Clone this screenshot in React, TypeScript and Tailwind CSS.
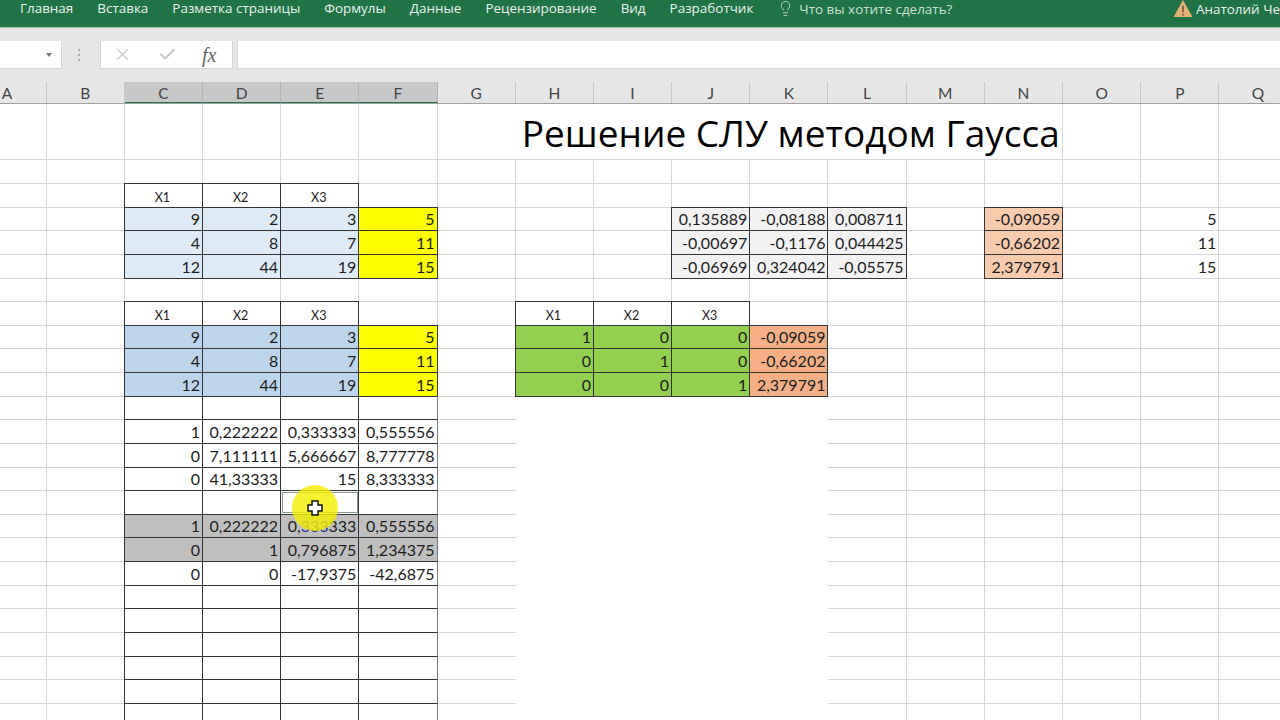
import type { ReactNode } from "react";
import { Check, Lightbulb, X } from "lucide-react";

const cols = ["A", "B", "C", "D", "E", "F", "G", "H", "I", "J", "K", "L", "M", "N", "O", "P", "Q"];
const tabs = ["Главная", "Вставка", "Разметка страницы", "Формулы", "Данные", "Рецензирование", "Вид", "Разработчик"];

const LIGHT = "bg-[#deeaf6]";
const BLUE = "bg-[#bdd5ec]";
const YELLOW = "bg-[#ffff00]";
const GRAY = "bg-[#bfbfbf]";
const PALE = "bg-[#f2f2f2]";
const GREEN = "bg-[#92d050]";
const PEACH = "bg-[#f8cbad]";
const ORANGE = "bg-[#f4b084]";

type Block = { r: number; c: number; fill?: string; small?: boolean; plain?: boolean; vals: ReactNode[] };

// r is the sheet row counted from the title row, c the column counted from A
const blocks: Block[] = [
  { r: 2, c: 2, small: true, vals: ["X1", "X2", "X3"] },
  { r: 3, c: 2, fill: LIGHT, vals: ["9", "2", "3"] },
  { r: 4, c: 2, fill: LIGHT, vals: ["4", "8", "7"] },
  { r: 5, c: 2, fill: LIGHT, vals: ["12", "44", "19"] },
  { r: 3, c: 5, fill: YELLOW, vals: ["5"] },
  { r: 4, c: 5, fill: YELLOW, vals: ["11"] },
  { r: 5, c: 5, fill: YELLOW, vals: ["15"] },
  { r: 3, c: 9, fill: PALE, vals: ["0,135889", "-0,08188", "0,008711"] },
  { r: 4, c: 9, fill: PALE, vals: ["-0,00697", "-0,1176", "0,044425"] },
  { r: 5, c: 9, fill: PALE, vals: ["-0,06969", "0,324042", "-0,05575"] },
  { r: 3, c: 13, fill: PEACH, vals: ["-0,09059"] },
  { r: 4, c: 13, fill: PEACH, vals: ["-0,66202"] },
  { r: 5, c: 13, fill: PEACH, vals: ["2,379791"] },
  { r: 3, c: 15, plain: true, vals: ["5"] },
  { r: 4, c: 15, plain: true, vals: ["11"] },
  { r: 5, c: 15, plain: true, vals: ["15"] },
  { r: 7, c: 2, small: true, vals: ["X1", "X2", "X3"] },
  { r: 8, c: 2, fill: BLUE, vals: ["9", "2", "3"] },
  { r: 9, c: 2, fill: BLUE, vals: ["4", "8", "7"] },
  { r: 10, c: 2, fill: BLUE, vals: ["12", "44", "19"] },
  { r: 8, c: 5, fill: YELLOW, vals: ["5"] },
  { r: 9, c: 5, fill: YELLOW, vals: ["11"] },
  { r: 10, c: 5, fill: YELLOW, vals: ["15"] },
  { r: 7, c: 7, small: true, vals: ["X1", "X2", "X3"] },
  { r: 8, c: 7, fill: GREEN, vals: ["1", "0", "0"] },
  { r: 9, c: 7, fill: GREEN, vals: ["0", "1", "0"] },
  { r: 10, c: 7, fill: GREEN, vals: ["0", "0", "1"] },
  { r: 8, c: 10, fill: ORANGE, vals: ["-0,09059"] },
  { r: 9, c: 10, fill: ORANGE, vals: ["-0,66202"] },
  { r: 10, c: 10, fill: ORANGE, vals: ["2,379791"] },
  { r: 11, c: 2, vals: ["", "", "", ""] },
  { r: 12, c: 2, vals: ["1", "0,222222", "0,333333", "0,555556"] },
  { r: 13, c: 2, vals: ["0", "7,111111", "5,666667", "8,777778"] },
  { r: 14, c: 2, vals: ["0", "41,33333", "15", "8,333333"] },
  { r: 15, c: 2, vals: ["", "", "", ""] },
  {
    r: 16,
    c: 2,
    fill: GRAY,
    vals: ["1", "0,222222", <>0,<span className="text-[#26349a]">333</span>333</>, "0,555556"],
  },
  { r: 17, c: 2, fill: GRAY, vals: ["0", "1", "0,796875", "1,234375"] },
  { r: 18, c: 2, vals: ["0", "0", "-17,9375", "-42,6875"] },
  { r: 19, c: 2, vals: ["", "", "", ""] },
  { r: 20, c: 2, vals: ["", "", "", ""] },
  { r: 21, c: 2, vals: ["", "", "", ""] },
  { r: 22, c: 2, vals: ["", "", "", ""] },
  { r: 23, c: 2, vals: ["", "", "", ""] },
  { r: 24, c: 2, vals: ["", "", "", ""] },
];

const cellMap: Record<string, { v: ReactNode; fill?: string; small?: boolean; plain?: boolean }> = {};
blocks.forEach((b) => {
  b.vals.forEach((v, i) => {
    cellMap[`${b.r}-${b.c + i}`] = { v, fill: b.fill, small: b.small, plain: b.plain };
  });
});

const gridBase = "border-r border-b border-[#d6d6d6]";

const SheetCell = ({ r, c }: { r: number; c: number }) => {
  const cell = cellMap[`${r}-${c}`];
  if (cell && !cell.plain) {
    return (
      <div
        className={`relative z-10 -mt-px -ml-px flex items-end overflow-hidden border border-[#333333] pr-[2px] text-[#1c1c1c] ${cell.fill ?? "bg-white"} ${
          c === 5 && r >= 11 ? "border-r-[#7d7d7d]" : ""
        } ${cell.small ? "justify-center pb-[1px] text-[12.5px] leading-4" : "justify-end pb-[1px] text-[16px] leading-5"}`}
      >
        {cell.v}
      </div>
    );
  }
  if (cell) {
    return <div className={`flex items-end justify-end pr-[2px] pb-[1px] text-[16px] leading-5 text-[#1c1c1c] ${gridBase}`}>{cell.v}</div>;
  }
  // the block under the results has no gridlines, column G keeps only its row lines
  if (r >= 11 && c === 6) return <div className="border-b border-[#d6d6d6]" />;
  if (r >= 11 && c >= 7 && c <= 10) return <div className="bg-white" />;
  return <div className={gridBase} />;
};

const App = () => {
  const rowIds = Array.from({ length: 24 }, (_, i) => i + 1);

  return (
    <div className="h-[720px] w-[1280px] overflow-hidden bg-white font-['Lato',_'Noto_Sans',_sans-serif]">
      <div className="flex h-7 items-start gap-6 border-b border-[#9fc4ad] bg-[#217346] pl-5 font-['Open_Sans',_sans-serif] text-[13.45px] leading-4 text-[#e9f1ec]">
        {tabs.map((t) => (
          <span key={t}>{t}</span>
        ))}
        <span className="flex items-center gap-[5px] text-[#cfe0d5]">
          <Lightbulb className="h-[17px] w-[17px]" strokeWidth={1.2} />
          Что вы хотите сделать?
        </span>
        <span className="ml-auto flex items-center gap-[3px] whitespace-nowrap">
          <svg viewBox="0 0 20 18" className="h-[17px] w-5">
            <path d="M10 0 20 18H0Z" fill="#e3b077" />
            <path d="M10 6v7M10 14.5v2" stroke="#5a4630" strokeWidth="1.4" />
          </svg>
          <span>Анатолий Че</span>
        </span>
      </div>

      <div className="bg-[#e6e6e6] pt-[13px]">
        <div className="flex h-7 items-stretch">
          <div className="flex w-[62px] items-center justify-end border-r border-b border-[#d4d4d4] bg-white pr-[9px]">
            <svg viewBox="0 0 6 4" className="h-[4px] w-[6px]">
              <path d="M0 0h6L3 4Z" fill="#777777" />
            </svg>
          </div>
          <div className="flex w-[38px] flex-col items-center justify-center gap-[3px] pr-1">
            <span className="h-[2px] w-[2px] bg-[#a8a8a8]" />
            <span className="h-[2px] w-[2px] bg-[#a8a8a8]" />
            <span className="h-[2px] w-[2px] bg-[#a8a8a8]" />
          </div>
          <div className="flex w-[133px] items-center border-r border-b border-l border-[#d4d4d4] bg-white">
            <X className="ml-[12px] h-[19px] w-[19px] text-[#c6c6c6]" strokeWidth={1.6} />
            <Check className="ml-[26px] h-[19px] w-[19px] text-[#c6c6c6]" strokeWidth={2.6} />
            <span className="ml-[25px] font-['Liberation_Serif',_serif] text-[20px] italic text-[#666666]">fx</span>
          </div>
          <div className="ml-1 flex-1 border-b border-l border-[#d4d4d4] bg-white" />
        </div>
        <div className="mt-[13px] -ml-[31.6px] grid h-[22px] w-[1330px] grid-cols-[repeat(17,78.2px)] border-b border-[#a0a0a0]">
          {cols.map((c, i) => (
            <div
              key={c}
              className={`flex items-center justify-center border-r pt-[3px] text-[15.5px] leading-none text-[#444444] ${
                i >= 2 && i <= 5 ? "border-b border-r-[#b4b4b4] border-b-[#217346] bg-[#c8c8c8]" : "border-[#c8c8c8]"
              }`}
            >
              {c}
            </div>
          ))}
        </div>
      </div>

      <div className="relative">
        <div className="-ml-[31.6px] grid w-[1330px] grid-cols-[repeat(17,78.2px)] grid-rows-[56.4px] auto-rows-[23.64px]">
          {cols.slice(0, 6).map((c) => (
            <div key={c} className={gridBase} />
          ))}
          <div className="col-span-8 flex items-center justify-center border-r border-b border-[#d6d6d6] pt-[3px] pl-[82px] font-['Open_Sans',_sans-serif] text-[37px] whitespace-nowrap text-black">
            Решение СЛУ методом Гаусса
          </div>
          <div className={gridBase} />
          <div className={gridBase} />
          <div className={gridBase} />
          {rowIds.map((r) => cols.map((c, i) => <SheetCell key={`${r}${c}`} r={r} c={i} />))}
        </div>

        {/* active cell and the pointer highlight from the recording */}
        <div className="absolute top-[388px] left-[282px] z-20 h-[21px] w-[76px] border border-[#8a9a8e]" />
        <div className="absolute top-[381px] left-[292px] z-20 h-[46px] w-[46px] rounded-full bg-[#f5ee00]/80" />
        <svg viewBox="0 0 16 16" className="absolute top-[396px] left-[307px] z-30 h-4 w-4">
          <path d="M5 1h6v4h4v6h-4v4H5v-4H1V5h4Z" fill="#ffffff" stroke="#111111" strokeWidth="1.5" />
        </svg>
      </div>
    </div>
  );
};

export default App;
